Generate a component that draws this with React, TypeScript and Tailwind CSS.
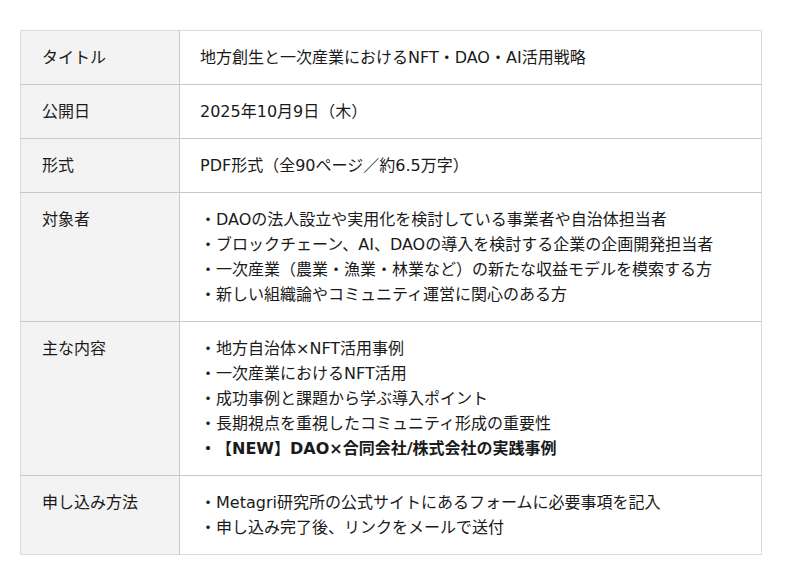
const rows: { label: string; lines: { text: string; bold?: boolean }[] }[] = [
  { label: 'タイトル', lines: [{ text: '地方創生と一次産業におけるNFT・DAO・AI活用戦略' }] },
  { label: '公開日', lines: [{ text: '2025年10月9日（木）' }] },
  { label: '形式', lines: [{ text: 'PDF形式（全90ページ／約6.5万字）' }] },
  {
    label: '対象者',
    lines: [
      { text: '・DAOの法人設立や実用化を検討している事業者や自治体担当者' },
      { text: '・ブロックチェーン、AI、DAOの導入を検討する企業の企画開発担当者' },
      { text: '・一次産業（農業・漁業・林業など）の新たな収益モデルを模索する方' },
      { text: '・新しい組織論やコミュニティ運営に関心のある方' },
    ],
  },
  {
    label: '主な内容',
    lines: [
      { text: '・地方自治体×NFT活用事例' },
      { text: '・一次産業におけるNFT活用' },
      { text: '・成功事例と課題から学ぶ導入ポイント' },
      { text: '・長期視点を重視したコミュニティ形成の重要性' },
      { text: '・【NEW】DAO×合同会社/株式会社の実践事例', bold: true },
    ],
  },
  {
    label: '申し込み方法',
    lines: [
      { text: '・Metagri研究所の公式サイトにあるフォームに必要事項を記入' },
      { text: '・申し込み完了後、リンクをメールで送付' },
    ],
  },
];

export default function App() {
  return (
    <main
      className="bg-white w-[800px] h-[585px] pt-[30px] pl-[20px]"
      style={{ fontFamily: '"DejaVu Sans", "Noto Sans CJK JP", sans-serif' }}
    >
      <table className="w-[742px] border-collapse border border-[#dcdcdc] text-[16px] leading-[25px] text-[#1a1a1a] [text-spacing-trim:space-all]">
        <tbody>
          {rows.map((row) => (
            <tr key={row.label} className="border-b border-[#c8c8c8] last:border-[#dcdcdc]">
              <td className="w-[159px] bg-[#f3f3f3] border-r border-[#c8c8c8] align-top pl-[21px] py-[14px]">
                {row.label}
              </td>
              <td className="align-top pl-[20px] py-[14px]">
                {row.lines.map((line, i) => (
                  <div key={i} className={line.bold ? 'font-bold' : ''}>
                    {line.text}
                  </div>
                ))}
              </td>
            </tr>
          ))}
        </tbody>
      </table>
    </main>
  );
}
